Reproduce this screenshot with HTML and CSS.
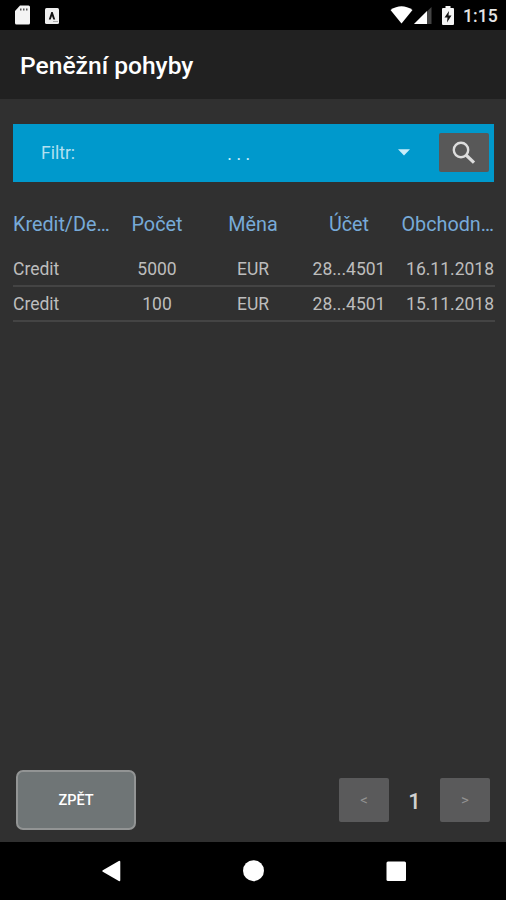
FILE: index.html
```html
<!DOCTYPE html>
<html lang="cs">
<head>
<meta charset="utf-8">
<title>Peněžní pohyby</title>
<link rel="stylesheet" href="styles.css">
</head>
<body>
<div class="screen">
  <div class="status">
    <svg class="sd" width="17" height="20" viewBox="0 0 17 20"><path d="M6 .5h8.500q1.500 0 1.500 1.500v16q0 1.500-1.500 1.500h-12Q1 19.500 1 18V6z" fill="#f4f4f4"/><path d="M6 3.500h1.500v2H6zM9 3.500h1.500v2H9zM12 3.500h1.500v2H12z" fill="#555"/></svg>
    <svg class="app" width="14" height="16" viewBox="0 0 14 16"><rect width="14" height="16" rx="1.500" fill="#eee"/><path d="M3.800 11.500 6.300 4h1.400l2.500 7.500H8.300L7 8l-1.300 3.500z" fill="#111"/><path d="M8 13.500h5" stroke="#aaa"/></svg>
    <span class="space"></span>
    <svg class="wifi" width="23" height="18" viewBox="0 0 23 18"><path d="M.5 4Q11.500-3.500 22.500 4L11.500 17.500z" fill="#fff"/></svg>
    <svg class="signal" width="18" height="17" viewBox="0 0 18 17"><path d="M0 17 17.500 0v17z" fill="#444"/><path d="M0 17 13 4v13z" fill="#fff"/></svg>
    <svg class="battery" width="12" height="19" viewBox="0 0 12 19"><path d="M3.500 0h5v2H11q1 0 1 1v15q0 1-1 1H1q-1 0-1-1V3q0-1 1-1h2.500z" fill="#f4f4f4"/><path d="M7 5 2.500 11.500h3L5 16.500 9.500 9.500h-3z" fill="#111"/></svg>
    <span class="clock">1:15</span>
  </div>
  <header class="title"><h1>Peněžní pohyby</h1></header>
  <main>
    <div class="filter">
      <span class="label">Filtr:</span>
      <span class="value">...</span>
      <svg class="caret" width="12" height="7" viewBox="0 0 12 7"><path d="M0 .3h12L6 6.600z" fill="#c9edfa"/></svg>
      <button class="search"><svg width="24" height="24" viewBox="0 0 24 24" fill="none" stroke="#ddd"><circle cx="9" cy="9" r="7.200" stroke-width="2.400"/><path d="m14 14 8 7.700" stroke-width="3.200"/></svg></button>
    </div>
    <div class="table">
      <div class="row head"><span>Kredit/De…</span><span>Počet</span><span>Měna</span><span>Účet</span><span>Obchodn…</span></div>
      <div class="row"><span>Credit</span><span>5000</span><span>EUR</span><span>28...4501</span><span>16.11.2018</span></div>
      <div class="row"><span>Credit</span><span>100</span><span>EUR</span><span>28...4501</span><span>15.11.2018</span></div>
    </div>
  </main>
  <footer>
    <button class="back">ZPĚT</button>
    <div class="pager"><button>&lt;</button><span class="page">1</span><button>&gt;</button></div>
  </footer>
  <nav>
    <svg width="20" height="22" viewBox="0 0 20 22"><path d="M18.300 1.800v18.400L2.300 11z" fill="#fff" stroke="#fff" stroke-width="2" stroke-linejoin="round"/></svg>
    <svg width="22" height="22" viewBox="0 0 22 22"><circle cx="10.500" cy="10.700" r="10.500" fill="#fff"/></svg>
    <svg width="20" height="20" viewBox="0 0 20 20"><rect x=".5" y=".5" width="19.500" height="19.500" rx="1.500" fill="#fff"/></svg>
  </nav>
</div>
</body>
</html>
```
FILE: styles.css
```css
* { box-sizing: border-box; }
body { margin: 0; background: #303030; font-family: Roboto, "Liberation Sans", sans-serif; }
button { font: inherit; border: 0; padding: 0; }
svg { display: block; flex: none; }
.screen { height: 900px; display: flex; flex-direction: column; background: #303030; overflow: hidden; }
.status { height: 30px; flex: none; background: #000; display: flex; align-items: flex-start; padding: 0 9px 0 14px; }
.sd { margin-top: 5px; }
.app { margin: 8px 0 0 14px; }
.space { flex: 1; }
.wifi { margin-top: 6px; }
.signal { margin: 7px 0 0 1px; }
.battery { margin: 6px 0 0 10px; }
.clock { width: 34px; margin-left: 9px; color: #e4e4e4; font-size: 17.600px; font-weight: 500; line-height: 32px; white-space: nowrap; }
.title { height: 69px; flex: none; background: #212121; padding-left: 20px; }
.title h1 { margin: 0; color: #fff; font-size: 24.600px; font-weight: 500; line-height: 72px; }
main { flex: 1; padding: 24.500px 11px 0 13px; }
.filter { height: 58px; margin-right: 1px; background: #0099cc; display: flex; align-items: center; color: #b3e0f0; font-size: 17.500px; }
.label { width: 140px; padding-left: 28px; }
.value { width: 172px; padding: 2px 0 0 4px; text-align: center; letter-spacing: 4.500px; color: #d4f0fa; }
.caret { margin-left: 73px; }
.search { width: 50px; height: 39px; margin: 0 5px 0 auto; background: #585858; border-radius: 2px; display: grid; place-items: center; }
.table { margin-top: 27.500px; }
.row { height: 35px; display: grid; grid-template-columns: repeat(4, 96px) 1fr; align-items: center; border-bottom: 2px solid #444; color: #bdbdbd; font-size: 17.500px; text-align: center; white-space: nowrap; }
.row span:first-child { text-align: left; }
.row span:last-child { text-align: right; padding-right: 1px; }
.head { height: 43px; border: 0; color: #77aad8; font-size: 19.800px; padding-bottom: 12px; }
footer { height: 72px; flex: none; display: flex; justify-content: space-between; align-items: flex-start; padding: 0 16px; }
.back { width: 120px; height: 60px; border: 2px solid #929494; border-radius: 7px; background: #6f7576; color: #fff; font-size: 14.500px; font-weight: 500; }
.pager { display: flex; align-items: center; margin-top: 8px; }
.pager button { width: 50px; height: 44px; background: #5a5a5b; color: #929292; border-radius: 2px; font-size: 15px; }
.page { width: 51px; padding-top: 2px; text-align: center; color: #d0d0d0; font-size: 22px; font-weight: 500; }
nav { height: 58px; flex: none; background: #000; display: flex; align-items: center; justify-content: space-between; padding: 0 100px 0 101px; }
```
